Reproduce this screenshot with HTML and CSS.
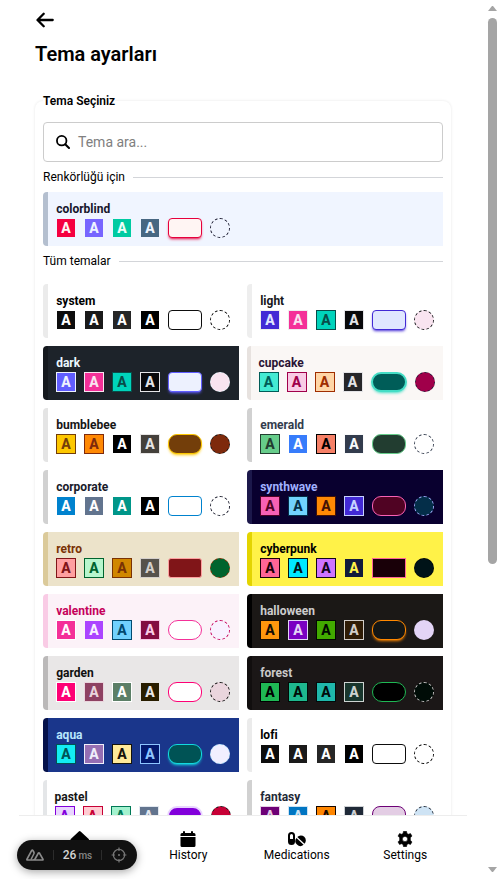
FILE: index.html
```html
<!DOCTYPE html>
<html lang="tr">
<head>
<meta charset="utf-8">
<title>Tema ayarları</title>
<link rel="stylesheet" href="styles.css">
</head>
<body>
<main class="page">
  <a class="back"><svg width="18" height="16" viewBox="0 0 18 16"><path d="M7.700 1.700 1.500 8l6.200 6.300M2 8h14.700" fill="none" stroke="#000" stroke-width="2.300" stroke-linecap="round" stroke-linejoin="round"/></svg></a>
  <h1 class="title">Tema ayarları</h1>
  <section class="panel">
    <h2 class="legend"><span>Tema Seçiniz</span></h2>
    <label class="search">
      <svg width="14" height="14" viewBox="0 0 14 14"><circle cx="5.700" cy="5.700" r="4.750" fill="none" stroke="#000" stroke-width="1.800"/><path d="m9.200 9.200 3.800 3.800" stroke="#000" stroke-width="2" stroke-linecap="round"/></svg>
      <span>Tema ara...</span>
    </label>
    <h3 class="divider">Renkörlüğü için</h3>
    <div class="themes single" id="accessible"></div>
    <h3 class="divider">Tüm temalar</h3>
    <div class="themes all" id="themes"></div>
  </section>
</main>
<nav class="dock">
  <a class="dock-item"><svg width="19" height="16" viewBox="0 0 19 16"><path d="M8.800.4q.9-.8 1.800 0L18.700 8q.8 1-.4 1.200H17V16H3V9.200H1.200Q0 9 .8 8z"/></svg></a>
  <a class="dock-item"><svg width="16" height="16" viewBox="0 0 16 16"><path d="M4 0a1 1 0 0 1 1 1v1h6V1a1 1 0 0 1 2 0v1h1a1.500 1.500 0 0 1 1.500 1.500V5H.5V3.500A1.500 1.500 0 0 1 2 2h1V1a1 1 0 0 1 1-1zM.5 6h15v8.500A1.500 1.500 0 0 1 14 16H2a1.500 1.500 0 0 1-1.500-1.500z"/></svg><span>History</span></a>
  <a class="dock-item"><svg width="18" height="16" viewBox="0 0 18 16"><path fill-rule="evenodd" d="M3.500 1A3.500 3.500 0 0 1 7 4.500v6a3.500 3.500 0 0 1-7 0v-6A3.500 3.500 0 0 1 3.500 1zm0 2A1.500 1.500 0 0 0 2 4.500V8h3V4.500A1.500 1.500 0 0 0 3.500 3z"/><path d="M9.300 6.100a4.900 4.900 0 0 1 7.200 6.700zM8.500 7a4.900 4.900 0 0 0 7.100 6.700z"/></svg><span>Medications</span></a>
  <a class="dock-item"><svg width="16" height="16" viewBox="0 0 16 16"><path fill-rule="evenodd" d="M6.500.2h3l.5 2.200 1.300.8 2.200-.7 1.500 2.600-1.600 1.600v2.600l1.600 1.600-1.500 2.600-2.200-.7-1.300.8-.5 2.200h-3L6 13.600l-1.300-.8-2.200.7L1 10.900l1.600-1.600V6.700L1 5.100l1.500-2.600 2.200.7L6 2.400zM8 5.400a2.600 2.600 0 1 0 0 5.200 2.600 2.600 0 0 0 0-5.200z" stroke="#000" stroke-width=".5" stroke-linejoin="round"/></svg><span>Settings</span></a>
</nav>
<aside class="devtools">
  <svg width="18" height="12" viewBox="0 0 18 12"><path d="M8 11H1.500Q.6 11 1 10.100L5.600 1.700q.7-1.100 1.400 0L8.300 4M8 11h8.400q.9 0 .5-.9l-3.300-5.800q-.7-1.100-1.400 0L9.300 9.500Q8.600 11 7 11" fill="none" stroke="#8b8b8b" stroke-width="1.700" stroke-linejoin="round"/><path d="M8.300 4 5 10.500" stroke="#8b8b8b" stroke-width="1.500"/></svg>
  <i class="bar"></i>
  <span class="timing">26 <small>ms</small></span>
  <i class="bar"></i>
  <svg width="16" height="16" viewBox="0 0 16 16"><g fill="none" stroke="#777" stroke-width="1.200"><circle cx="8" cy="8" r="5.600"/><path d="M8 .6v3.400M8 12v3.400M.6 8H4M12 8h3.400"/></g><circle cx="8" cy="8" r="1" fill="#777"/></svg>
</aside>
<div class="scrollbar"><i class="arrow up"></i><i class="thumb"></i><i class="arrow down"></i></div>
<script src="app.js"></script>
</body>
</html>
```
FILE: styles.css
```css
* { box-sizing: border-box; }
body {
  margin: 0;
  height: 879px;
  overflow: hidden;
  background: #fff;
  color: #000;
  font-family: Roboto, sans-serif;
  font-size: 12px;
}
h1, h2, h3 { margin: 0; }
svg { display: block; flex: none; }
.page {
  width: 424px;
  height: 879px;
  margin-left: 31px;
  padding: 0 4px;
  overflow: hidden;
}
.back { display: flex; height: 39px; padding: 12px 0 0 1px; }
.title { font-size: 20px; line-height: 30px; font-weight: 600; }
.panel {
  margin-top: 32px;
  padding: 0 8px;
  border-radius: 8px;
  box-shadow: 0 0 3px rgba(0, 0, 0, .10);
}
.legend { height: 21px; font-size: 12px; line-height: 16px; font-weight: 600; }
.legend span { display: block; width: max-content; transform: translateY(-8px); background: #fff; }
.search {
  display: flex;
  align-items: center;
  gap: 8px;
  height: 40px;
  padding: 0 12px;
  border: 1px solid #ccc;
  border-radius: 4px;
  color: #808080;
  font-size: 14px;
}
.divider {
  display: flex;
  align-items: center;
  gap: 8px;
  height: 30px;
  font-size: 12px;
  font-weight: 400;
}
.divider::after { content: ""; flex: 1; height: 1px; background: #d3d5d9; }
.themes { display: grid; gap: 8px; }
.single { grid-template-columns: 1fr; }
.all { grid-template-columns: 1fr 1fr; margin-top: 8px; }
.theme {
  height: 54px;
  padding: 8px;
  border-left: 5px solid var(--edge);
  border-radius: 4px 0 0 4px;
  background: var(--base);
  color: var(--text);
}
.theme.thin { border-left-width: 4px; padding-left: 7.5px; }
.name { display: block; height: 18px; padding-left: .2px; font-size: 12px; line-height: 18px; font-weight: 700; }
.thin .name { padding-left: 0; }
.samples { display: flex; gap: 8px; }
.swatch {
  display: flex;
  align-items: center;
  justify-content: center;
  width: 20px;
  height: 20px;
  border: 1px solid var(--line);
  background: var(--fill);
  color: var(--ink);
  font-size: 14px;
  line-height: 18px;
  font-weight: 800;
}
.button {
  width: 34px;
  height: 20px;
  border: 1px solid var(--line);
  border-radius: var(--radius);
  background: var(--fill);
}
.thin .button { width: 36px; border-width: 2px; }
.raised { box-shadow: 0 2px 3px -1px var(--line); }
.dot { width: 20px; height: 20px; border: 1px dashed var(--line); border-radius: 50%; background: var(--fill); }
.dock {
  position: absolute;
  left: 19px;
  top: 815px;
  width: 448px;
  height: 64px;
  padding: 0 7.5px 0 6.5px;
  display: grid;
  grid-template-columns: repeat(4, 1fr);
  border-top: 1px solid #ededed;
  background: #fff;
}
.dock-item { display: flex; flex-direction: column; align-items: center; padding-top: 15px; font-size: 12px; line-height: 16px; }
.devtools {
  position: absolute;
  left: 17px;
  top: 840px;
  width: 120px;
  height: 30px;
  padding: 0 10px 0 9px;
  display: flex;
  align-items: center;
  justify-content: space-between;
  border-radius: 15px;
  background: #111;
  color: #d4d4d4;
  box-shadow: 0 2px 9px rgba(0, 0, 0, .35);
}
.bar { width: 1px; height: 10px; background: #2c2c2c; }
.timing { font-size: 12px; font-weight: 500; }
.timing small { color: #858585; font-size: 10px; margin-left: -1px; }
.scrollbar {
  position: absolute;
  top: 0;
  right: 3px;
  width: 9px;
  height: 879px;
  padding: 6px 0 7px;
  display: flex;
  flex-direction: column;
}
.arrow { border: 4.5px solid transparent; border-top-width: 0; border-bottom-width: 0; height: 5px; }
.up { border-bottom: 5px solid #a5a5a5; }
.down { border-top: 5px solid #a5a5a5; margin-top: auto; }
.thumb { height: 546px; margin-top: 7px; border-radius: 5px; background: #a5a5a5; }
```
FILE: app.js
```js
// name, base, edge, text, swatches [fill, ink, line], button [fill, line, radius, raised], dot [fill, line], thin edge
const mono = [["#0d0d0d","#fff","#fff"],["#1a1a1a","#fff","#fff"],["#262626","#fff","#fff"],["#000","#fff","#fff"]];
const accessible = [
  ["colorblind","#f0f5ff","#b4bfcf","#16162b",[["#f50040","#fff5f3","#f0f5ff"],["#7765ff","#eef4ff","#f0f5ff"],["#00cba2","#effff9","#f0f5ff"],["#476782","#eef5ff","#f0f5ff"]],["#fff5f3","#e6003c",4,1],["#f0f5ff","#16162b"]]
];
const themes = [
  ["system","#fff","#ebebeb","#000",mono,["#fff","#0d0d0d",4,0],["#fff","#000"]],
  ["light","#fff","#eee","#18181b",[["#422ad5","#e0e7ff","#eee"],["#f43098","#f9e4f0","#eee"],["#00d3bb","#084d49","#084d49"],["#09090b","#e4e4e7","#e4e4e7"]],["#e0e7ff","#422ad5",4,1],["#f9e4f0","#18181b"]],
  ["dark","#1d232a","#15191e","#ecf9ff",[["#605dff","#edf1fe","#edf1fe"],["#f43098","#f9e4f0","#f9e4f0"],["#00d3bb","#084d49","#084d49"],["#09090b","#e4e4e7","#e4e4e7"]],["#edf1fe","#605dff",4,1],["#f9e4f0","#ecf9ff"]],
  ["cupcake","#faf7f5","#e7e2df","#291334",[["#44ebd3","#005d58","#005d58"],["#f9cbe5","#a0004a","#a0004a"],["#ffd6a7","#9f2d00","#9f2d00"],["#262629","#e4e4e7","#e4e4e7"]],["#005d58","#44ddc5",10,1],["#a0004a","#291334"],1],
  ["bumblebee","#fff","#e4e4e4","#161616",[["#fdc700","#733e0a","#733e0a"],["#ff8904","#7e2a0c","#7e2a0c"],["#000","#fff","#fff"],["#44403b","#e7e5e4","#e7e5e4"]],["#733e0a","#fdc700",9,1],["#7e2a0c","#161616"]],
  ["emerald","#fff","#d1d1d1","#333c4d",[["#66cc8a","#223d30","#223d30"],["#377cfb","#fff","#fff"],["#f68067","#000","#000"],["#333c4d","#f9fafb","#f9fafb"]],["#223d30","#66cc8a",9,0],["#fff","#333c4d"]],
  ["corporate","#fff","#d1d1d1","#181a2a",[["#0082ce","#fff","#fff"],["#62748e","#fff","#fff"],["#009689","#fff","#fff"],["#000","#fff","#fff"]],["#fff","#0082ce",4,0],["#fff","#181a2a"]],
  ["synthwave","#09002f","#1c184b","#a1b1ff",[["#f861b4","#500323","#500323"],["#71d1fe","#042e49","#042e49"],["#ff8904","#441306","#441306"],["#422ad5","#c6d2ff","#c6d2ff"]],["#500323","#f861b4",9,0],["#042e49","#a1b1ff"]],
  ["retro","#ece3ca","#dbca9a","#793205",[["#ff9fa0","#801518","#801518"],["#b7f6cd","#00642e","#00642e"],["#d08700","#793205","#793205"],["#56524c","#d4cfcb","#d4cfcb"]],["#801518","#ff9fa0",3,0],["#00642e","#793205"]],
  ["cyberpunk","#fff248","#e3d400","#000",[["#ff6596","#190008","#190008"],["#00e8ff","#001318","#001318"],["#ce74ff","#11051b","#11051b"],["#111a3b","#fff248","#fff248"]],["#190008","#ff6596",0,0],["#001318","#000"]],
  ["valentine","#fcf2f8","#f9cbe5","#c5005a",[["#f43098","#fff","#fff"],["#ab44ff","#f9f3ff","#fcf2f8"],["#71d1fe","#024a70","#024a70"],["#830c41","#f9cbe5","#f9cbe5"]],["#fff","#f43098",10,0],["#f8f2ff","#c5005a"]],
  ["halloween","#1b1816","#000","#cdcdcd",[["#ff960d","#150c04","#150c04"],["#7a00c2","#e3d4f6","#e3d4f6"],["#42aa00","#010a00","#010a00"],["#2f1b05","#d2ccc7","#d2ccc7"]],["#131616","#ff8800",9,1],["#e3d4f6","#e3d4f6"]],
  ["garden","#e9e7e7","#bbb9b9","#100f0f",[["#fe0075","#fff","#fff"],["#8e4162","#ead5dd","#ead5dd"],["#5c7f67","#fff","#fff"],["#291e00","#e9e7e7","#e9e7e7"]],["#fff","#fe0075",9,0],["#ead5dd","#100f0f"]],
  ["forest","#1b1717","#110e0e","#cac9c9",[["#1fb854","#000","#000"],["#1eb88e","#000c07","#000c07"],["#1fb8ab","#010c0b","#010c0b"],["#19362d","#cdd3d1","#cdd3d1"]],["#000","#1fb854",10,0],["#000c07","#cac9c9"]],
  ["aqua","#1a368b","#05124b","#b8e6fe",[["#13ecf3","#005355","#005355"],["#966fb3","#f0effb","#f0effb"],["#ffe999","#16130a","#16130a"],["#03186f","#8ec5ff","#8ec5ff"]],["#005355","#13d9df",9,1],["#f1efff","#b8e6fe"]],
  ["lofi","#fff","#ebebeb","#000",mono,["#fff","#0d0d0d",4,0],["#fff","#000"]],
  ["pastel","#fff","#e4e6e8","#161616",[["#e9d4ff","#8200db","#8200db"],["#ffcbd2","#c70036","#c70036"],["#a3f2cf","#007956","#007956"],["#62748e","#e2e8f0","#e2e8f0"]],["#8200db","#e9d4ff",10,0],["#c70036","#161616"],1],
  ["fantasy","#fff","#d1d1d1","#1f2937",[["#6d0076","#e5cee5","#e5cee5"],["#0075c2","#cde3f4","#cde3f4"],["#ff8600","#160600","#160600"],["#1f2937","#cdd0d3","#cdd0d3"]],["#e3cde4","#6d0076",8,0],["#cee3f4","#1f2937"]]
];
function vars(fill, line, extra = "") {
  return `style="--fill:${fill};--line:${line};${extra}"`;
}
function card([name, base, edge, text, swatches, button, dot, thin]) {
  const letters = swatches.map(([fill, ink, line]) => `<span class="swatch" ${vars(fill, line, `--ink:${ink}`)}>A</span>`).join("");
  return `<article class="theme${thin ? " thin" : ""}" style="--base:${base};--edge:${edge};--text:${text}">
    <b class="name">${name}</b>
    <div class="samples">${letters}<span class="button${button[3] ? " raised" : ""}" ${vars(button[0], button[1], `--radius:${button[2]}px`)}></span><span class="dot" ${vars(dot[0], dot[1])}></span></div>
  </article>`;
}
document.getElementById("accessible").innerHTML = accessible.map(card).join("");
document.getElementById("themes").innerHTML = themes.map(card).join("");
```
